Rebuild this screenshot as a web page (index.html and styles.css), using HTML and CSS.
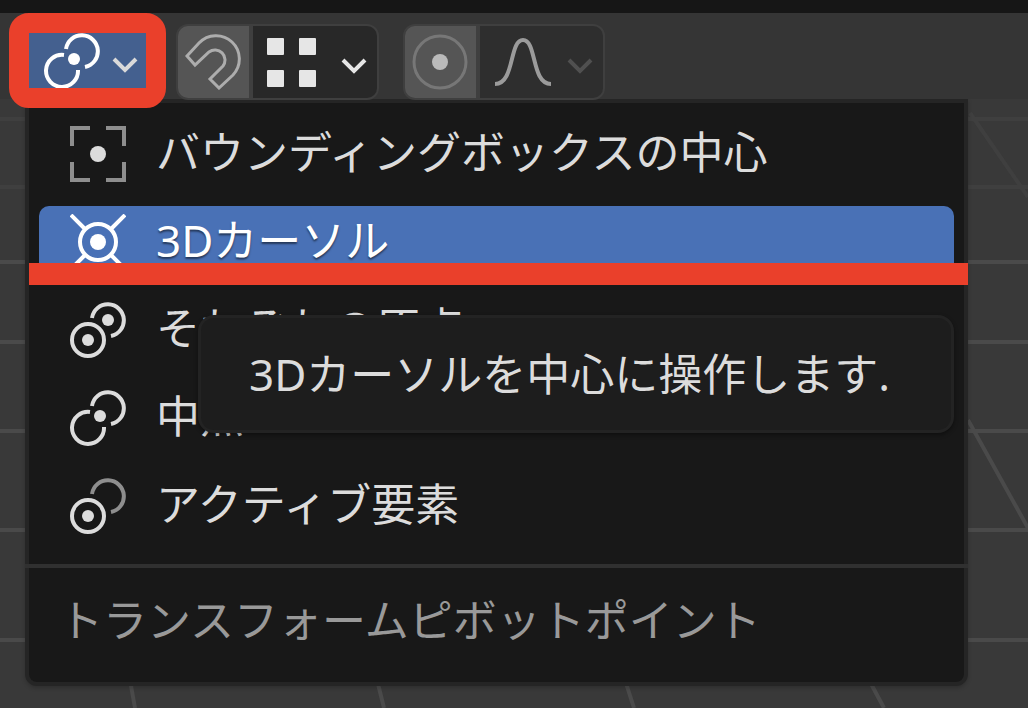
FILE: index.html
```
<!DOCTYPE html>
<html lang="ja">
<head>
  <meta charset="UTF-8" />
  <meta name="viewport" content="width=device-width, initial-scale=1.0"/>
  <title>トランスフォームピボットポイント</title>
  <link rel="stylesheet" href="styles.css">
</head>
<body>
  <!-- 3D viewport grid -->
  <svg class="grid" viewBox="0 0 1028 708" preserveAspectRatio="none" aria-hidden="true">
    <path class="grid-far" d="M0 119H1028M0 187H1028M970 113L1028 197"/>
    <path d="M0 262H1028M0 342H1028M0 431H1028M0 530H1028M0 640H1028M968 420L1028 528M130 680L135 708M377 680L384 708M625 680L634 708M869 680L884 708"/>
  </svg>

  <div class="top-strip"></div>
  <header class="toolbar">
    <button class="pivot-button" aria-label="トランスフォームピボットポイント" aria-expanded="true">
      <svg class="icon" viewBox="0 0 56 56">
        <path d="M22 16A16 16 0 1 1 41 34M20 22A16 16 0 1 0 34 37"/>
        <circle class="dot" cx="30" cy="26" r="6"/>
      </svg>
      <svg class="chevron" viewBox="0 0 26 18"><path d="M2 3L13 14L24 3"/></svg>
    </button>

    <div class="tool-group">
      <button class="tool-toggle" aria-label="スナップ">
        <svg class="icon magnet" viewBox="0 0 56 56">
          <path d="M2 22L14 9A23 23 0 0 1 48 41L34 54L25 45L38 32A10 10 0 0 0 24 18L10 31Z"/>
        </svg>
      </button>
      <button class="tool-select" aria-label="スナップ先">
        <svg class="icon squares" viewBox="0 0 56 56">
          <rect x="4" y="4" width="17" height="17" rx="1"/>
          <rect x="36" y="4" width="17" height="17" rx="1"/>
          <rect x="4" y="36" width="17" height="17" rx="1"/>
          <rect x="36" y="36" width="17" height="17" rx="1"/>
        </svg>
        <svg class="chevron" viewBox="0 0 26 18"><path d="M2 3L13 14L24 3"/></svg>
      </button>
    </div>

    <div class="tool-group disabled">
      <button class="tool-toggle" aria-label="プロポーショナル編集">
        <svg class="icon proportional" viewBox="0 0 56 56">
          <circle cx="28" cy="28" r="26"/>
          <circle class="dot" cx="28" cy="28" r="8"/>
        </svg>
      </button>
      <button class="tool-select" aria-label="減衰">
        <svg class="icon falloff" viewBox="0 0 56 56">
          <path d="M0 50C20 50 14 6 28 6S36 50 56 50"/>
        </svg>
        <svg class="chevron" viewBox="0 0 26 18"><path d="M2 3L13 14L24 3"/></svg>
      </button>
    </div>
  </header>

  <div class="menu">
    <button class="menu-item">
      <svg class="icon" viewBox="0 0 56 56">
        <path class="dim" d="M20 2H2V20M36 2H54V20M54 36V54H36M20 54H2V36"/>
        <circle class="dot" cx="28" cy="28" r="8"/>
      </svg>
      <span>バウンディングボックスの中心</span>
    </button>
    <button class="menu-item active">
      <svg class="icon" viewBox="0 0 56 56">
        <circle cx="28" cy="28" r="18"/>
        <circle class="dot" cx="28" cy="28" r="8"/>
        <path d="M1 1L15 15M55 1L41 15M1 55L15 41M55 55L41 41"/>
      </svg>
      <span>3Dカーソル</span>
    </button>
    <button class="menu-item">
      <svg class="icon" viewBox="0 0 56 56">
        <path d="M22 16A16 16 0 1 1 41 34"/>
        <circle cx="18" cy="38" r="16"/>
        <circle class="dot" cx="18" cy="38" r="6"/>
        <circle class="dot" cx="38" cy="18" r="6"/>
      </svg>
      <span>それぞれの原点</span>
    </button>
    <button class="menu-item">
      <svg class="icon" viewBox="0 0 56 56">
        <path d="M22 16A16 16 0 1 1 41 34M20 22A16 16 0 1 0 34 37"/>
        <circle class="dot" cx="30" cy="26" r="6"/>
      </svg>
      <span>中点</span>
    </button>
    <button class="menu-item">
      <svg class="icon" viewBox="0 0 56 56">
        <path class="dim" d="M22 16A16 16 0 1 1 41 34"/>
        <circle cx="18" cy="38" r="16"/>
        <circle class="dot" cx="18" cy="38" r="6"/>
      </svg>
      <span>アクティブ要素</span>
    </button>
    <div class="menu-title">トランスフォームピボットポイント</div>

    <div class="underline"></div>
    <div class="tooltip" role="tooltip">3Dカーソルを中心に操作します.</div>
  </div>
</body>
</html>
```
FILE: styles.css
```
* {
  box-sizing: border-box;
}

body {
  margin: 0;
  min-height: 100vh;
  overflow: hidden;
  background-color: #393939;
  color: #dcdcdc;
  font-family: "Noto Sans", "Noto Sans CJK JP", sans-serif;
  font-size: 44px;
  line-height: 56px;
}

button {
  border: none;
  padding: 0;
  background: none;
  color: inherit;
  font: inherit;
  cursor: pointer;
}

svg {
  display: block;
  flex-shrink: 0;
  fill: none;
  stroke: currentColor;
  stroke-width: 4;
}

.grid {
  position: absolute;
  top: 0;
  left: 0;
  width: 100%;
  height: 100%;
  stroke: #4a4a4a;
}

.grid-far {
  stroke: #3f3f3f;
}

.icon {
  width: 56px;
  height: 56px;
}

.dot {
  fill: currentColor;
  stroke: none;
}

.dim {
  stroke: #8e8e8e;
}

.chevron {
  width: 26px;
  height: 18px;
}

/* Toolbar */
.top-strip {
  position: relative;
  height: 13px;
  background-color: #161616;
}

.toolbar {
  position: relative;
  z-index: 2;
  display: flex;
  align-items: flex-start;
  height: 86px;
  padding-left: 9px;
  background-color: #353535;
}

.pivot-button {
  display: flex;
  align-items: center;
  gap: 12px;
  height: 95px;
  padding: 0 8px 0 15px;
  border: 20px solid #ea402b;
  border-radius: 20px;
  background-color: #44608f;
  color: #fff;
  overflow: hidden;
}

.pivot-button .chevron {
  margin-top: 8px;
  color: #dadada;
}

.tool-group {
  display: flex;
  gap: 4px;
  height: 76px;
  margin: 11px 0 0 10px;
  border: 2px solid #3f3f3f;
  border-radius: 12px;
  background-color: #3f3f3f;
  overflow: hidden;
}

.tool-group + .tool-group {
  margin-left: 24px;
}

.tool-toggle {
  padding: 0 8px 0 7px;
  background-color: #555;
}

.tool-select {
  display: flex;
  align-items: center;
  gap: 22px;
  padding: 0 10px;
  background-color: #282828;
  color: #e6e6e6;
}

.tool-select .chevron {
  margin-top: 8px;
}

.magnet {
  color: #adadad;
  stroke-width: 3;
}

.squares {
  fill: currentColor;
  stroke: none;
}

.proportional {
  stroke: #777;
  stroke-width: 3;
  color: #bababa;
}

.disabled .tool-select {
  gap: 16px;
  padding-left: 15px;
  background-color: #2e2e2e;
  color: #505050;
}

.falloff {
  color: #9b9b9b;
}

/* Dropdown menu */
.menu {
  position: absolute;
  z-index: 1;
  top: 99px;
  left: 25px;
  right: 60px;
  display: flex;
  flex-direction: column;
  gap: 16px;
  padding: 15px 10px 0;
  border: 4px solid #252525;
  border-radius: 0 0 12px 12px;
  background-color: #181818;
  box-shadow: 0 2px 4px rgba(0, 0, 0, 0.2);
}

.menu-item {
  display: flex;
  align-items: center;
  gap: 30px;
  height: 72px;
  padding-left: 31px;
  border-radius: 10px;
  text-align: left;
  white-space: nowrap;
}

.menu-item span {
  padding-bottom: 4px;
}

.menu-item.active {
  background-color: #4971b6;
  color: #fff;
  text-shadow: 0 2px 2px rgba(0, 0, 0, 0.5);
}

.menu-title {
  margin: 6px -14px 0;
  padding: 24px 34px 34px;
  border-top: 4px solid #303030;
  color: #999;
  white-space: nowrap;
}

.underline {
  position: absolute;
  top: 160px;
  left: 0;
  right: -4px;
  height: 22px;
  background-color: #ea402b;
}

.tooltip {
  position: absolute;
  top: 212px;
  left: 169px;
  right: 10px;
  padding: 28px 48px;
  border: 3px solid #232323;
  border-radius: 16px;
  background-color: #1d1d1d;
  box-shadow: 0 2px 4px rgba(0, 0, 0, 0.4);
  white-space: nowrap;
}
```
